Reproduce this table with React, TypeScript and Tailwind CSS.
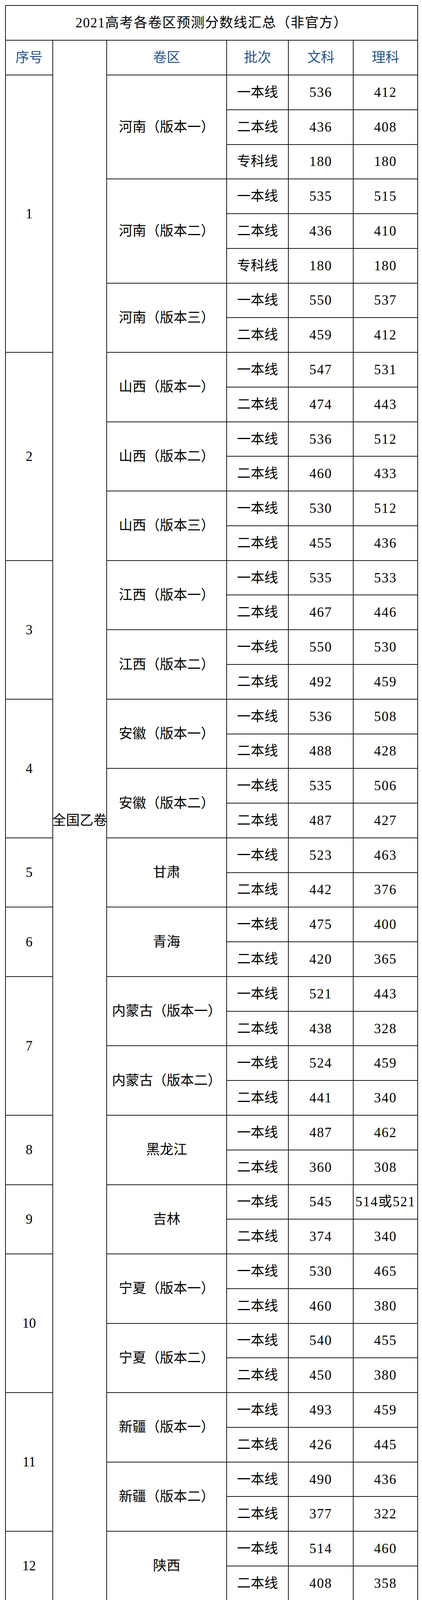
import React from "react";

type Row = [string, string, string];
type Sub = { name: string; rows: Row[] };
type Group = { no: string; subs: Sub[] };

const two = (a: string, b: string, c: string, d: string): Row[] => [
  ["一本线", a, b],
  ["二本线", c, d],
];

const groups: Group[] = [
  {
    no: "1",
    subs: [
      { name: "河南（版本一）", rows: [["一本线", "536", "412"], ["二本线", "436", "408"], ["专科线", "180", "180"]] },
      { name: "河南（版本二）", rows: [["一本线", "535", "515"], ["二本线", "436", "410"], ["专科线", "180", "180"]] },
      { name: "河南（版本三）", rows: two("550", "537", "459", "412") },
    ],
  },
  {
    no: "2",
    subs: [
      { name: "山西（版本一）", rows: two("547", "531", "474", "443") },
      { name: "山西（版本二）", rows: two("536", "512", "460", "433") },
      { name: "山西（版本三）", rows: two("530", "512", "455", "436") },
    ],
  },
  {
    no: "3",
    subs: [
      { name: "江西（版本一）", rows: two("535", "533", "467", "446") },
      { name: "江西（版本二）", rows: two("550", "530", "492", "459") },
    ],
  },
  {
    no: "4",
    subs: [
      { name: "安徽（版本一）", rows: two("536", "508", "488", "428") },
      { name: "安徽（版本二）", rows: two("535", "506", "487", "427") },
    ],
  },
  { no: "5", subs: [{ name: "甘肃", rows: two("523", "463", "442", "376") }] },
  { no: "6", subs: [{ name: "青海", rows: two("475", "400", "420", "365") }] },
  {
    no: "7",
    subs: [
      { name: "内蒙古（版本一）", rows: two("521", "443", "438", "328") },
      { name: "内蒙古（版本二）", rows: two("524", "459", "441", "340") },
    ],
  },
  { no: "8", subs: [{ name: "黑龙江", rows: two("487", "462", "360", "308") }] },
  { no: "9", subs: [{ name: "吉林", rows: two("545", "514或521", "374", "340") }] },
  {
    no: "10",
    subs: [
      { name: "宁夏（版本一）", rows: two("530", "465", "460", "380") },
      { name: "宁夏（版本二）", rows: two("540", "455", "450", "380") },
    ],
  },
  {
    no: "11",
    subs: [
      { name: "新疆（版本一）", rows: two("493", "459", "426", "445") },
      { name: "新疆（版本二）", rows: two("490", "436", "377", "322") },
    ],
  },
  { no: "12", subs: [{ name: "陕西", rows: two("514", "460", "408", "358") }] },
];

const spanClass: Record<number, string> = {
  2: "row-span-2",
  3: "row-span-3",
  4: "row-span-4",
  6: "row-span-6",
  8: "row-span-8",
};

const cell = "bg-white flex items-center justify-center leading-none whitespace-nowrap";
const head = cell + " text-[#2a5587]";

export default function App() {
  const body: React.ReactNode[] = [];
  groups.forEach((g) => {
    const gCount = g.subs.reduce((t, x) => t + x.rows.length, 0);
    g.subs.forEach((s, si) => {
      s.rows.forEach((r, ri) => {
        const k = g.no + "-" + si + "-" + ri;
        if (si === 0 && ri === 0) {
          body.push(
            <div key={k + "no"} className={cell + " " + spanClass[gCount]}>
              {g.no}
            </div>
          );
        }
        if (ri === 0) {
          body.push(
            <div key={k + "name"} className={cell + " " + spanClass[s.rows.length]}>
              {s.name}
            </div>
          );
        }
        body.push(
          <div key={k + "a"} className={cell}>
            {r[0]}
          </div>,
          <div key={k + "b"} className={cell + " tracking-[2px]"}>
            {r[1]}
          </div>,
          <div key={k + "c"} className={cell + " tracking-[2px]"}>
            {r[2]}
          </div>
        );
      });
    });
  });

  return (
    <div
      className="w-[1080px] h-[4113px] bg-white pt-[13px] pl-[13px] text-black text-[35px]"
      style={{ fontFamily: '"Liberation Serif", "Noto Sans CJK SC", serif' }}
    >
      <div className="grid w-[1057px] bg-[#1a1a1a] p-[2px] gap-[2px] grid-cols-[119px_136px_305px_156px_164px_163px] grid-rows-[87px_87px_repeat(44,86.77px)]">
        <div className={cell + " col-span-6 tracking-[1.5px]"}>2021高考各卷区预测分数线汇总（非官方）</div>
        <div className={head}>序号</div>
        <div className={cell + " row-[span_45/span_45]"}>全国乙卷</div>
        <div className={head}>卷区</div>
        <div className={head}>批次</div>
        <div className={head}>文科</div>
        <div className={head}>理科</div>
        {body}
      </div>
    </div>
  );
}
